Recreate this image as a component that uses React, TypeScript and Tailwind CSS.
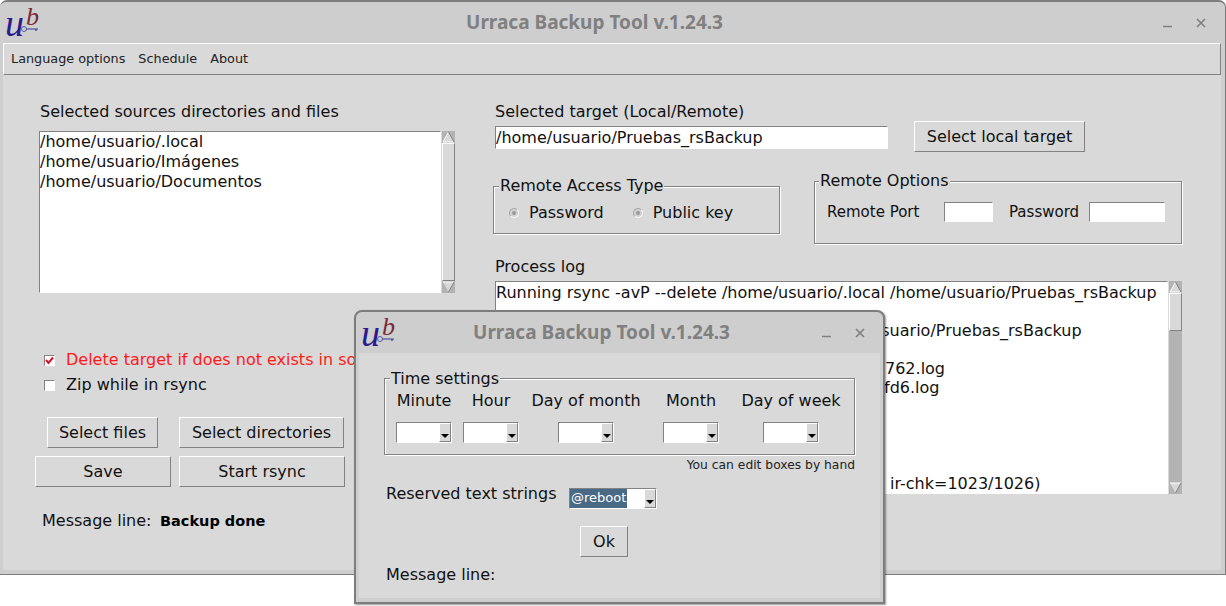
const raised = 'border border-t-white border-l-white border-r-[#828282] border-b-[#828282]'
const sunken = 'border border-t-[#828282] border-l-[#828282] border-r-white border-b-white'
const groove = 'border border-[#828282] shadow-[inset_1px_1px_0_#fff,1px_1px_0_#fff]'

function Logo() {
  return (
    <div className="relative w-[36px] h-[32px] shrink-0">
      <span className="absolute left-[2px] top-0 text-[38px] leading-[38px] italic text-[#2b1a8e] font-['Liberation_Serif',serif]">u</span>
      <span className="absolute left-[23px] top-0 text-[26px] leading-[26px] italic text-[#7a2a38] font-['Liberation_Serif',serif]">b</span>
      <svg className="absolute left-[17px] top-[21px]" width="22" height="8" viewBox="0 0 22 8" fill="none">
        <circle cx="4" cy="4" r="2.5" stroke="#5a5aa8" strokeWidth="1" />
        <path d="M6.5 4H18M16 4V6" stroke="#3b3a9a" strokeWidth="1.2" />
      </svg>
    </div>
  )
}

function TitleBar({ inset, right }: { inset: string; right: string }) {
  return (
    <div className={`relative h-[43px] shrink-0 flex items-center justify-center pr-[36px] pt-[2px] ${inset}`}>
      <div className="absolute left-[3px] top-[4px]">
        <Logo />
      </div>
      <span className="text-[19px] font-bold text-[#808080] font-['Noto_Sans',sans-serif]">Urraca Backup Tool v.1.24.3</span>
      <div className={`absolute top-[18px] flex gap-[24px] text-[#808080] ${right}`}>
        <svg width="9" height="10" viewBox="0 0 9 10"><path d="M0 8.5H9" stroke="currentColor" strokeWidth="1.5" /></svg>
        <svg width="10" height="10" viewBox="0 0 10 10"><path d="M1 1L9 9M9 1L1 9" stroke="currentColor" strokeWidth="1.7" /></svg>
      </div>
    </div>
  )
}

function Arrow({ down }: { down?: boolean }) {
  return (
    <div className="h-[12px] w-full bg-[#b3b3b3] shrink-0">
      <svg width="13" height="12" viewBox="0 0 13 12">
        {down ? (
          <>
            <path d="M1 1H12L6.5 11Z" fill="#d9d9d9" />
            <path d="M1 1H12" stroke="#fff" />
            <path d="M12 1L6.5 11" stroke="#828282" />
          </>
        ) : (
          <>
            <path d="M6.5 1L12 11H1Z" fill="#d9d9d9" />
            <path d="M6.5 1L1 11" stroke="#fff" />
            <path d="M1 11H12" stroke="#fff" />
            <path d="M6.5 1L12 11" stroke="#828282" />
          </>
        )}
      </svg>
    </div>
  )
}

function Scrollbar({ thumb }: { thumb?: string }) {
  return (
    <div className="w-[13px] h-full flex flex-col bg-[#b3b3b3]">
      <Arrow />
      <div className="flex-1 min-h-0">
        <div className={`bg-[#d9d9d9] ${raised} ${thumb ?? 'h-full'}`} />
      </div>
      <Arrow down />
    </div>
  )
}

function Btn({ label, width }: { label: string; width: string }) {
  return <div className={`h-[31px] flex items-center justify-center bg-[#d9d9d9] text-[#111] ${raised} ${width}`}>{label}</div>
}

function Radio({ label }: { label: string }) {
  return (
    <div className="flex items-center gap-[10px]">
      <span className="w-[10px] h-[10px] rounded-full bg-[#d0d0d0] border border-[#a8a8a8] border-b-white border-r-white flex items-center justify-center">
        <span className="w-[4px] h-[4px] rounded-full bg-[#9a9a9a]" />
      </span>
      <span>{label}</span>
    </div>
  )
}

function Combo() {
  return (
    <div className={`w-[56px] h-[21px] flex bg-white ${sunken}`}>
      <div className="flex-1" />
      <ComboButton />
    </div>
  )
}

function ComboButton() {
  return (
    <div className={`w-[12px] h-full bg-[#d9d9d9] flex items-end justify-center pb-[3px] ${raised}`}>
      <svg width="8" height="4" viewBox="0 0 8 4"><path d="M0 0H8L4 4Z" fill="#000" /></svg>
    </div>
  )
}

const logLines = [
  { pad: 'pl-0', text: 'Running rsync -avP --delete /home/usuario/.local /home/usuario/Pruebas_rsBackup' },
  { pad: 'pl-0', text: '' },
  { pad: 'pl-[319px]', text: '/home/usuario/Pruebas_rsBackup' },
  { pad: 'pl-0', text: '' },
  { pad: 'pl-[389px]', text: '762.log' },
  { pad: 'pl-[388px]', text: 'fd6.log' },
  { pad: 'pl-0', text: '' },
  { pad: 'pl-0', text: '' },
  { pad: 'pl-0', text: '' },
  { pad: 'pl-0', text: '' },
  { pad: 'pl-[394px]', text: 'ir-chk=1023/1026)' },
]

const timeColumns = [
  { label: 'Minute', cls: 'w-[56px] ml-[11px]' },
  { label: 'Hour', cls: 'w-[56px] ml-[11px]' },
  { label: 'Day of month', cls: 'w-[108px] ml-[13px]' },
  { label: 'Month', cls: 'w-[56px] ml-[23px]' },
  { label: 'Day of week', cls: 'w-[100px] ml-[22px]' },
]

function ScheduleDialog() {
  return (
    <div className="absolute left-[354px] top-[310px] w-[531px] h-[294px] flex flex-col bg-[#cecece] border-2 border-[#7d7d7d] rounded-t-[8px] shadow-[1px_1px_2px_#0006] px-[3px] pb-[4px] z-10">
      <TitleBar inset="-mt-[2px] -mx-[3px]" right="right-[18px]" />
      <div className="flex-1 min-h-0 bg-[#d9d9d9] flex flex-col pl-[25px] pt-[25px]">
        <div className={`relative w-[471px] h-[77px] shrink-0 ${groove}`}>
          <span className="absolute left-[5px] top-[-10px] h-5 leading-5 bg-[#d9d9d9] px-[1px]">Time settings</span>
          <div className="flex pt-[12px]">
            {timeColumns.map((col) => (
              <div key={col.label} className={`flex flex-col items-center gap-[11px] ${col.cls}`}>
                <span className="h-5 leading-5 whitespace-nowrap">{col.label}</span>
                <Combo />
              </div>
            ))}
          </div>
        </div>
        <div className="w-[471px] h-[16px] mt-[2px] text-right text-[12.3px] leading-4 text-[#222]">You can edit boxes by hand</div>
        <div className="flex mt-[10px] h-[26px]">
          <span className="h-5 leading-[22px] w-[185px] pl-[2px]">Reserved text strings</span>
          <div className={`w-[88px] h-[21px] mt-[5px] flex bg-white ${sunken}`}>
            <div className="flex-1">
              <span className="block w-fit h-[19px] leading-[18px] bg-[#4a6984] text-white text-[13px] px-[1px]">@reboot</span>
            </div>
            <ComboButton />
          </div>
        </div>
        <div className="mt-[17px] ml-[196px]">
          <Btn label="Ok" width="w-[48px]" />
        </div>
        <div className="mt-[7px] h-5 leading-[22px] pl-[2px]">Message line:</div>
      </div>
    </div>
  )
}

export default function App() {
  return (
    <div className="relative w-[1226px] h-[606px] bg-white overflow-hidden font-['DejaVu_Sans',sans-serif] text-[16px] text-[#111]">
      {/* Main window */}
      <div className="h-[575px] flex flex-col bg-[#cecece] border-t-2 border-r border-b border-[#7d7d7d] rounded-t-[7px] pl-[3px] pr-[4px] pb-[4px]">
        <TitleBar inset="-mt-[2px] -ml-[3px] -mr-[4px]" right="right-[19px]" />

        {/* Menu */}
        <div className={`h-[32px] shrink-0 flex items-center gap-[13px] pl-[7px] bg-[#d9d9d9] text-[12.8px] text-[#222] ${raised}`}>
          <span>Language options</span>
          <span>Schedule</span>
          <span>About</span>
        </div>

        {/* Body */}
        <div className="flex-1 min-h-0 bg-[#d9d9d9] flex pt-[26px]">
          {/* Sources */}
          <div className="w-[492px] shrink-0 flex flex-col">
            <div className="ml-[37px] h-5 leading-[22px]">Selected sources directories and files</div>
            <div className="ml-[36px] mt-[10px] h-[162px] flex gap-px">
              <div className={`w-[402px] h-full bg-white leading-5 text-[#111] ${sunken}`}>
                <div>/home/usuario/.local</div>
                <div>/home/usuario/Imágenes</div>
                <div>/home/usuario/Documentos</div>
              </div>
              <Scrollbar />
            </div>
            <div className="ml-[41px] mt-[57px] flex items-center gap-[11px] h-5 text-[#ff1a1a]">
              <span className={`w-[11px] h-[11px] bg-white flex items-center justify-center shrink-0 ${sunken}`}>
                <svg width="9" height="9" viewBox="0 0 9 9" fill="none"><path d="M1 4L3.5 7L8 1.5" stroke="#e0102a" strokeWidth="2" /></svg>
              </span>
              {/* cut off by the dialog in the screenshot */}
              <span className="w-[288px] overflow-hidden whitespace-nowrap">Delete target if does not exists in so</span>
            </div>
            <div className="ml-[41px] mt-[5px] flex items-center gap-[11px] h-5">
              <span className={`w-[11px] h-[11px] bg-white shrink-0 ${sunken}`} />
              <span>Zip while in rsync</span>
            </div>
            <div className="ml-[44px] mt-[22px] flex gap-[21px]">
              <Btn label="Select files" width="w-[111px]" />
              <Btn label="Select directories" width="w-[165px]" />
            </div>
            <div className="ml-[32px] mt-[8px] flex gap-[8px]">
              <Btn label="Save" width="w-[136px]" />
              <Btn label="Start rsync" width="w-[166px]" />
            </div>
            <div className="ml-[39px] mt-[24px] h-5 leading-5 flex">
              <span className="w-[118px]">Message line:</span>
              <span className="font-bold text-[14.5px] text-black">Backup done</span>
            </div>
          </div>

          {/* Target, remote access, log */}
          <div className="flex-1 min-w-0 flex flex-col">
            <div className="h-5 leading-[22px]">Selected target (Local/Remote)</div>
            <div className="h-[31px] flex items-center gap-[26px]">
              <div className={`w-[393px] h-[23px] mt-[2px] bg-white leading-[22px] ${sunken}`}>/home/usuario/Pruebas_rsBackup</div>
              <Btn label="Select local target" width="w-[171px]" />
            </div>

            <div className="mt-[29px] -ml-[2px] flex items-start gap-[34px]">
              <div className={`relative mt-[5px] w-[287px] h-[48px] ${groove}`}>
                <span className="absolute left-[5px] top-[-11px] h-5 leading-5 bg-[#d9d9d9] px-[1px]">Remote Access Type</span>
                <div className="flex gap-[29px] pl-[15px] pt-[14px]">
                  <Radio label="Password" />
                  <Radio label="Public key" />
                </div>
              </div>
              <div className={`relative w-[368px] h-[63px] ${groove}`}>
                <span className="absolute left-[4px] top-[-11px] h-5 leading-5 bg-[#d9d9d9] px-[1px]">Remote Options</span>
                <div className="flex items-center pl-[12px] pt-[19px] text-[15px]">
                  <span className="w-[117px]">Remote Port</span>
                  <span className={`w-[49px] h-[20px] bg-white ${sunken}`} />
                  <span className="ml-[16px] w-[80px]">Password</span>
                  <span className={`w-[76px] h-[20px] bg-white ${sunken}`} />
                </div>
              </div>
            </div>

            <div className="mt-[12px] h-5 leading-[22px]">Process log</div>
            <div className="mt-[5px] h-[213px] flex gap-px">
              <div className={`w-[673px] h-full bg-white overflow-hidden pt-px leading-[19.1px] ${sunken}`}>
                {logLines.map((line, i) => (
                  <div key={i} className={`h-[19.1px] whitespace-nowrap ${line.pad}`}>{line.text}</div>
                ))}
              </div>
              <Scrollbar thumb="h-[38px]" />
            </div>
          </div>
        </div>
      </div>

      <ScheduleDialog />
    </div>
  )
}
